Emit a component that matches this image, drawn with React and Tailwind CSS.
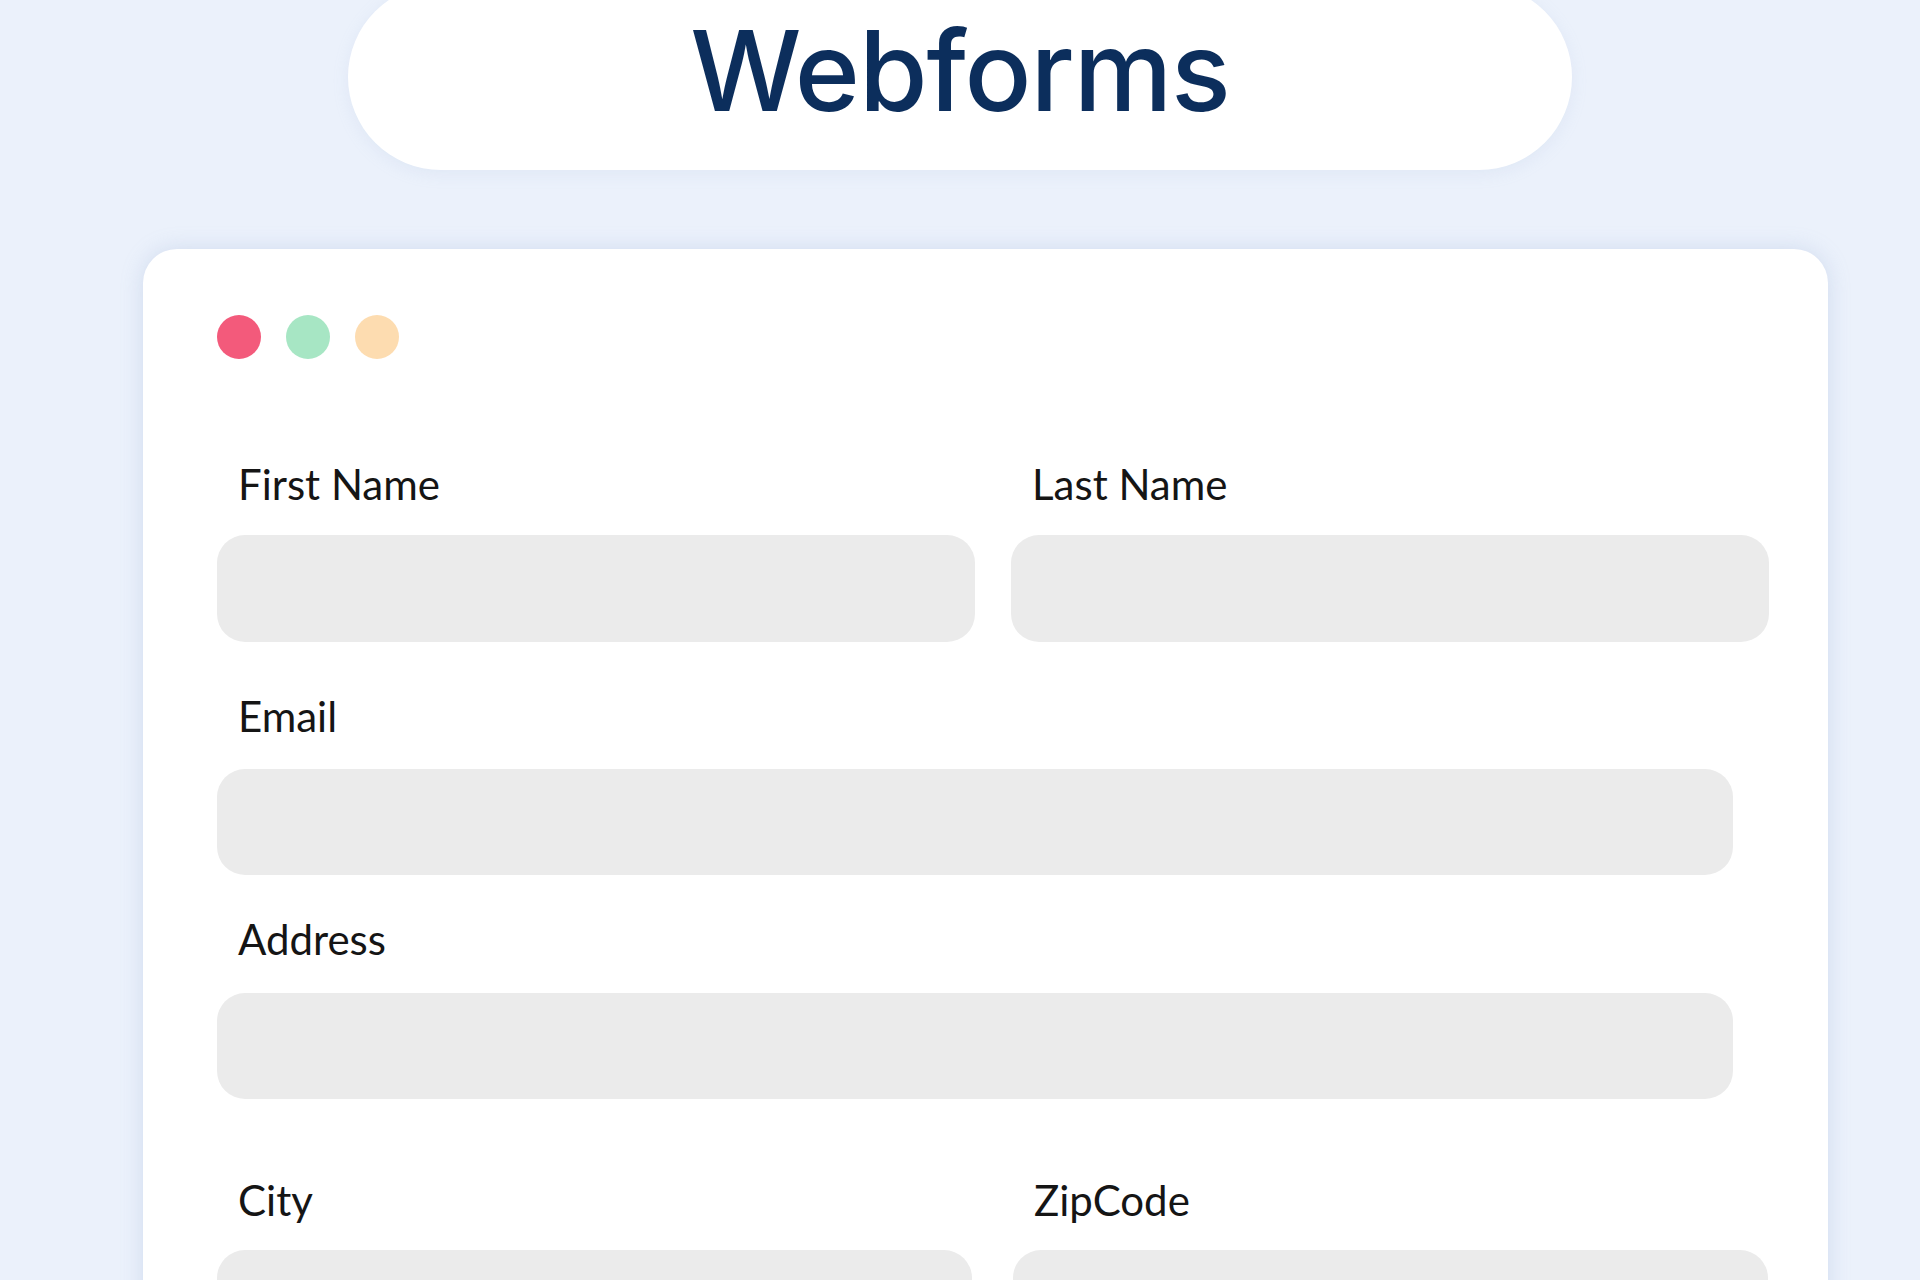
import React from 'react';

const label = "block pl-[21px] text-[42px] leading-[52px] text-[#151515] font-['Lato',sans-serif]";
const field = "rounded-[28px] bg-[#ebebeb]";

function Field({ name, top, gap, width, height = 'h-[106px]' }) {
  return (
    <div className={`flex flex-col ${top}`} style={{ width }}>
      <span className={label}>{name}</span>
      <div className={`${gap} ${height} w-full ${field}`} />
    </div>
  );
}

export default function App() {
  return (
    <div className="h-[1280px] w-[1920px] overflow-hidden bg-[#ebf1fb]">
      {/* titel-pil bovenaan */}
      <div className="flex justify-center">
        <div className="-mt-[16px] flex h-[186px] w-[1224px] items-start justify-center rounded-full bg-white pt-[31px] shadow-[0_4px_16px_rgba(160,180,215,0.15)]">
          <h1 className="font-['Inter',sans-serif] text-[111px] font-medium leading-none tracking-[-0.01em] text-[#0c2e5c]">
            Webforms
          </h1>
        </div>
      </div>

      {/* venster met formulier */}
      <div className="ml-[143px] mt-[79px] h-[1200px] w-[1685px] rounded-[34px] bg-white pl-[74px] pt-[66px] shadow-[0_0_22px_rgba(140,165,210,0.28)]">
        <div className="flex gap-[25px]">
          <span className="h-[44px] w-[44px] rounded-full bg-[#f35a7b]" />
          <span className="h-[44px] w-[44px] rounded-full bg-[#a7e6c4]" />
          <span className="h-[44px] w-[44px] rounded-full bg-[#fddcb0]" />
        </div>

        <div className="mt-[99px] flex gap-[36px]">
          <Field name="First Name" top="" gap="mt-[25px]" width="758px" height="h-[107px]" />
          <Field name="Last Name" top="" gap="mt-[25px]" width="758px" height="h-[107px]" />
        </div>

        <Field name="Email" top="mt-[48px]" gap="mt-[27px]" width="1516px" />
        <Field name="Address" top="mt-[38px]" gap="mt-[28px]" width="1516px" />

        <div className="mt-[75px] flex gap-[41px]">
          <Field name="City" top="" gap="mt-[24px]" width="755px" />
          <Field name="ZipCode" top="" gap="mt-[24px]" width="755px" />
        </div>
      </div>
    </div>
  );
}
